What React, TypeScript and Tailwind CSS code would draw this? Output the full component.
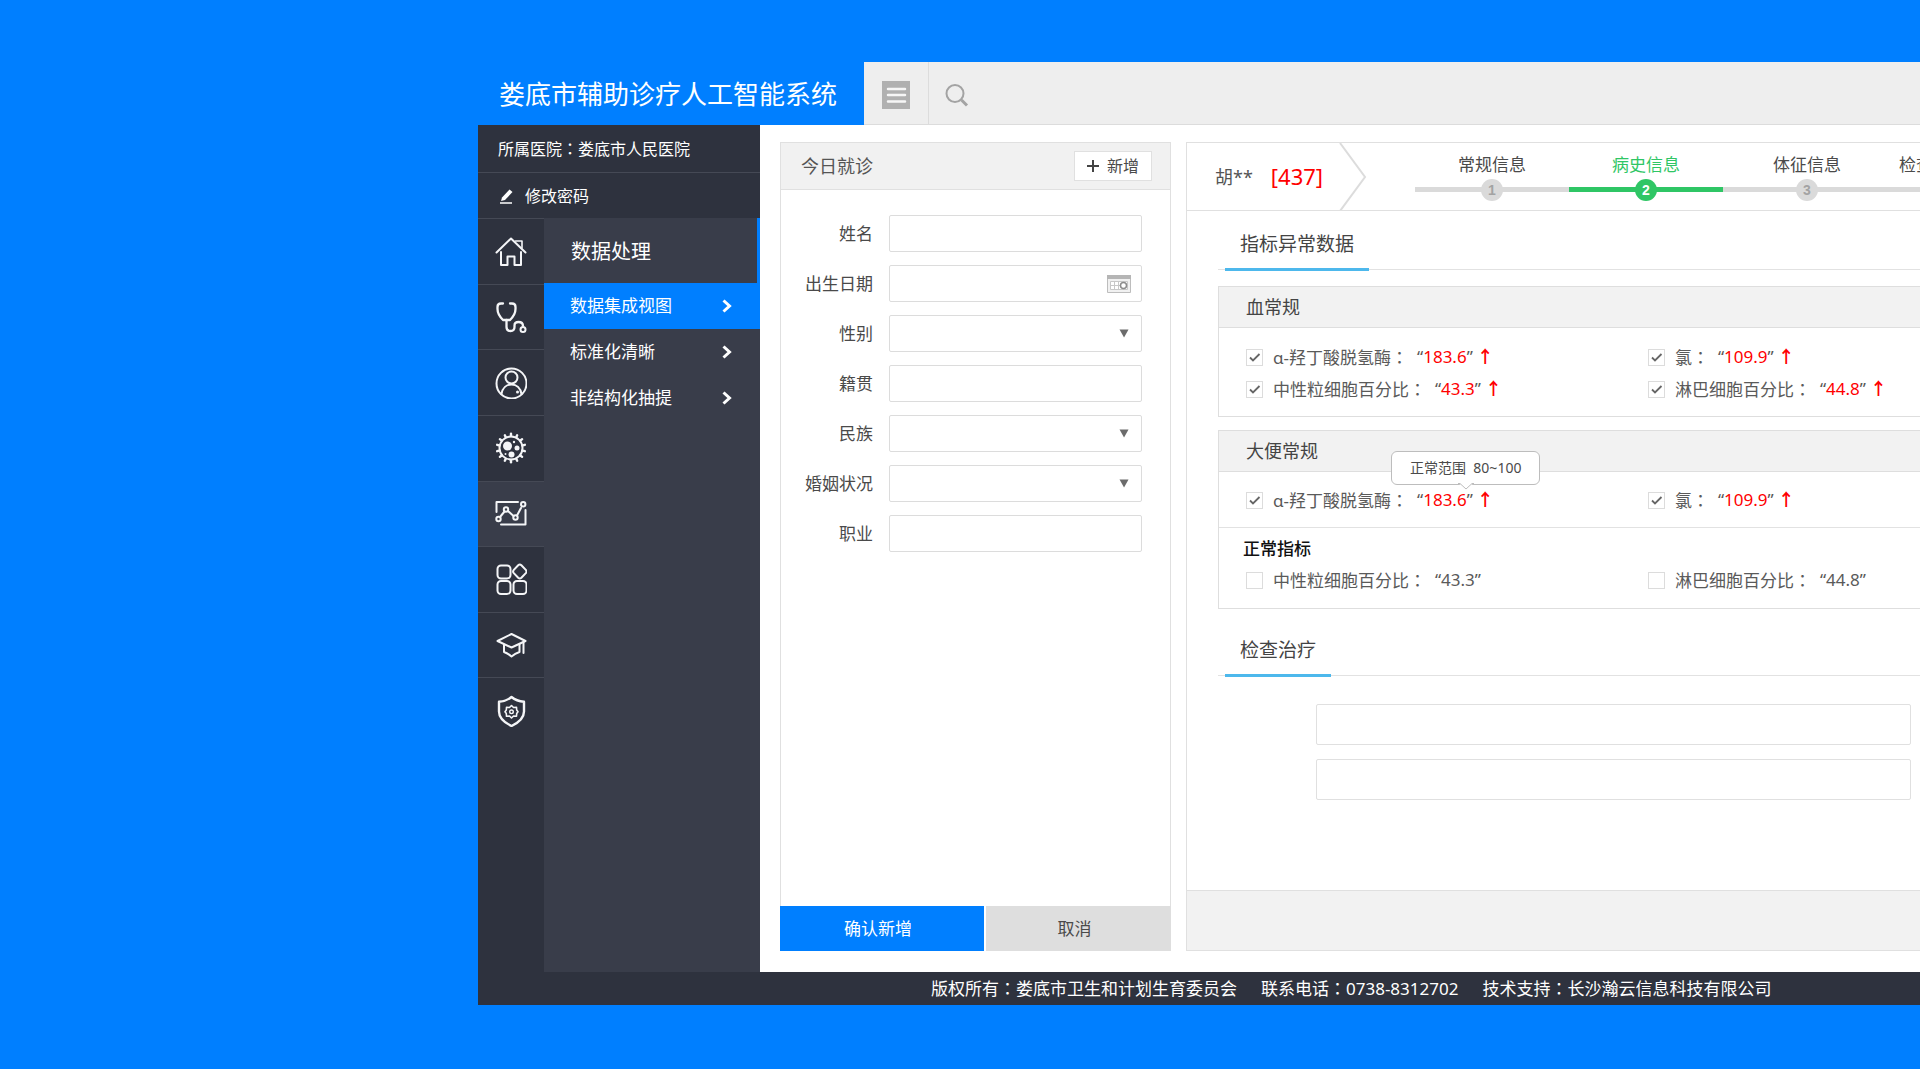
import React, { useId, useState } from "react";

const line = {
  fill: "none",
  stroke: "currentColor",
  strokeWidth: 2,
  strokeLinecap: "round" as const,
  strokeLinejoin: "round" as const,
};

function Glyph({ children }: { children: React.ReactNode }) {
  return (
    <svg viewBox="0 0 32 32" className="size-8 text-[#f4f5f7]" aria-hidden="true" {...line}>
      {children}
    </svg>
  );
}

const spikes = Array.from({ length: 14 }, (_, i) => (i * 360) / 14);

const navItems = [
  {
    label: "首页",
    icon: (
      <Glyph>
        <path d="M1.5 17.5 16 3.5l14.5 14" />
        <path d="M20.500 6h6.500v7" strokeWidth={1.6} />
        <path d="M6 17v13h6.500v-8.500h7V30H26V17" />
      </Glyph>
    ),
  },
  {
    label: "诊疗",
    icon: (
      <Glyph>
        <path d="M8 2.500H6Q2.500 2.500 2.500 6v2c0 5 2.500 8 5.500 11h7c3-3 5.500-6 5.500-11V6q0-3.500-3.500-3.500h-2" strokeWidth={2.3} />
        <path d="M11.500 19v7q0 4 4 4t4-4v-1.500q0-3.500 4-3.500 4.500 0 4.500 4" strokeWidth={2.3} />
        <circle cx="28" cy="28.500" r="2.500" />
      </Glyph>
    ),
  },
  {
    label: "患者",
    icon: (
      <Glyph>
        <circle cx="16.500" cy="16.500" r="15" />
        <circle cx="16.500" cy="10.500" r="6" />
        <path d="M6.500 27c1-6 5-9.500 10-9.500s9 3.500 10 9.500" />
        <circle cx="22.500" cy="25" r="1.500" fill="currentColor" stroke="none" />
      </Glyph>
    ),
  },
  {
    label: "病毒",
    icon: (
      <Glyph>
        <circle cx="16" cy="16" r="11.500" />
        {spikes.map((a) => (
          <path key={a} d="M16 4V1.800" strokeWidth={2.4} transform={`rotate(${a} 16 16)`} />
        ))}
        <g fill="currentColor" stroke="none">
          <circle cx="12.500" cy="14" r="4.500" />
          <circle cx="22" cy="16" r="2.500" />
          <circle cx="16.500" cy="22.500" r="3" />
          <circle cx="19" cy="10" r="1.200" />
          <circle cx="10.500" cy="22" r="1" />
        </g>
      </Glyph>
    ),
  },
  {
    label: "数据处理",
    icon: (
      <Glyph>
        <path d="M1.500 14V4H23" />
        <path d="M30.500 12v14.500H6" />
        <circle cx="3.500" cy="21" r="2.200" />
        <circle cx="11" cy="11.500" r="2.200" />
        <circle cx="20.500" cy="19.500" r="2.200" />
        <circle cx="28.200" cy="6.200" r="2.200" />
        <path d="m5 19 4.500-5.500M13 13l5.500 5M22 17.500l4-7.500" />
      </Glyph>
    ),
  },
  {
    label: "应用",
    icon: (
      <Glyph>
        <rect x="2.500" y="2.500" width="13" height="13" rx="3.500" />
        <path d="M23.200 2.200q1.600-1.400 3.200 0l4.400 4.700q1.400 1.600 0 3.200l-4.400 4.700q-1.600 1.400-3.200 0l-4.400-4.700q-1.400-1.600 0-3.200z" />
        <rect x="2.500" y="18" width="13" height="13" rx="3.500" />
        <rect x="18.500" y="18" width="13" height="13" rx="3.500" />
      </Glyph>
    ),
  },
  {
    label: "教学",
    icon: (
      <Glyph>
        <path d="M2.500 12 16.500 5 30.500 12 16.500 18.500z" />
        <path d="M9 15.500V23q4 1.500 7.500 4.500Q20 24.500 24.500 23v-7.500" />
        <path d="M28.500 13v11" />
      </Glyph>
    ),
  },
  {
    label: "安全设置",
    icon: (
      <Glyph>
        <path d="M16.500 2q5 4.200 12.500 4.700v9.800q0 8.500-12.500 14.500Q4 25 4 16.500V6.700Q11.500 6.200 16.500 2z" strokeWidth={2.4} />
        <path d="m16.500 10.500 2 2 3-.3.200 2.800 1.300 1.800-1.300 1.700-.2 2.800-3-.3-2 2-2-2-3 .3-.2-2.800L10 16.800l1.300-1.800.2-2.800 3 .3z" strokeWidth={1.6} />
        <circle cx="16.500" cy="16.800" r="1.800" strokeWidth={1.4} />
      </Glyph>
    ),
  },
];

const subItems = ["数据集成视图", "标准化清晰", "非结构化抽提"];

/* Full-width colon whose dots sit in the middle of the em box. */
function Colon() {
  return <span className="font-['Noto_Sans_CJK_TC',sans-serif]">：</span>;
}

function Sidebar() {
  return (
    <aside className="flex w-[282px] shrink-0 flex-col bg-[#2e323e] text-white">
      <div className="flex h-[47px] items-center pl-5 text-base">
        <span>所属医院<Colon />娄底市人民医院</span>
      </div>
      <button type="button" className="flex h-[46px] items-center gap-[11px] border-t border-[#454955] pl-[21px] text-left text-base">
        <svg viewBox="0 0 15 16" className="h-4 w-[15px]" aria-hidden="true">
          <path d="M2 13 3 9.500 10.500 1.500 13.500 4 6 12z" fill="currentColor" />
          <path d="M1 15h12" stroke="currentColor" strokeWidth="1.500" />
        </svg>
        修改密码
      </button>
      <div className="flex flex-1">
        <nav className="w-[66px] shrink-0" aria-label="主菜单">
          <div className="grid h-[525px] grid-rows-8">
            {navItems.map((item, i) => (
              <button
                key={item.label}
                type="button"
                aria-label={item.label}
                className={`flex items-center justify-center border-t border-[#454955] ${i === 4 ? "bg-[#393d4a]" : ""}`}
              >
                {item.icon}
              </button>
            ))}
          </div>
        </nav>
        <nav className="flex-1 bg-[#393d4a]" aria-label="数据处理">
          <h2 className="flex h-[65px] items-center border-r-3 border-[#007fff] pt-[3px] pl-[27px] text-xl">数据处理</h2>
          <ul>
            {subItems.map((label, i) => (
              <li key={label}>
                <a href="#" className={`flex h-[46px] items-center justify-between pr-7 pl-[26px] text-[17px] ${i === 0 ? "bg-[#007fff]" : ""}`}>
                  {label}
                  <svg viewBox="0 0 10 14" className="h-[14px] w-[10px]" fill="none" stroke="currentColor" strokeWidth="3" aria-hidden="true">
                    <path d="m1.500 1.500 6 5.500-6 5.500" />
                  </svg>
                </a>
              </li>
            ))}
          </ul>
        </nav>
      </div>
    </aside>
  );
}

const fields = [
  { label: "姓名", kind: "text" },
  { label: "出生日期", kind: "date" },
  { label: "性别", kind: "select" },
  { label: "籍贯", kind: "text" },
  { label: "民族", kind: "select" },
  { label: "婚姻状况", kind: "select" },
  { label: "职业", kind: "text" },
];

function Field({ label, kind }: { label: string; kind: string }) {
  const id = useId();
  const box = "h-[37px] w-full appearance-none rounded-[2px] border border-[#dcdcdc] bg-white px-3 text-[#555]";
  return (
    <div className="flex items-center">
      <label htmlFor={id} className="w-[92px] text-right text-[17px] text-[#4a4a4a]">
        {label}
      </label>
      <div className="relative ml-4 flex-1">
        {kind === "select" ? <select id={id} className={box} /> : <input id={id} type="text" className={box} />}
        {kind === "select" && (
          <svg viewBox="0 0 10 9" className="pointer-events-none absolute top-[14px] right-[13px] h-[9px] w-[10px]" aria-hidden="true">
            <path d="M.5.500h9L5 8.500z" fill="#6b6b6b" />
          </svg>
        )}
        {kind === "date" && (
          <svg viewBox="0 0 24 18" className="pointer-events-none absolute top-[10px] right-[11px] h-[18px] w-6" aria-hidden="true">
            <path d="M.5.500h23v17H.5z" fill="#f1f1f1" stroke="#bdbdbd" />
            <path d="M0 0h24v4H0z" fill="#b5b5b5" />
            <path d="M3.500 6.500h17v8h-17zM3.500 10.500h17M7.500 6.500v8M11.500 6.500v8" fill="#fff" stroke="#c8c8c8" />
            <circle cx="16.500" cy="10.500" r="3" fill="#fff" stroke="#8c8c8c" strokeWidth="1.500" />
          </svg>
        )}
      </div>
    </div>
  );
}

function IntakeForm() {
  return (
    <form className="flex w-[391px] shrink-0 flex-col" onSubmit={(e) => e.preventDefault()}>
      <div className="flex h-12 items-center justify-between border border-[#e0e0e0] bg-[#f1f1f1] pr-[18px] pl-5">
        <h2 className="text-lg text-[#555]">今日就诊</h2>
        <button type="button" className="flex h-[30px] items-center gap-2 border border-[#e0e0e0] bg-white px-3 text-base text-[#4a4a4a]">
          <svg viewBox="0 0 12 12" className="size-3" aria-hidden="true">
            <path d="M6 0v12M0 6h12" stroke="#444" strokeWidth="2" />
          </svg>
          新增
        </button>
      </div>
      <div className="flex flex-1 flex-col gap-[13px] border-x border-[#e0e0e0] pt-[25px] pr-7 pb-6">
        {fields.map((f) => (
          <Field key={f.label} {...f} />
        ))}
      </div>
      <div className="flex h-[45px] gap-[2px] text-[17px]">
        <button type="submit" className="w-[204px] bg-[#007fff] pr-2 text-white">确认新增</button>
        <button type="button" className="flex-1 bg-[#dedede] pr-2 text-[#4a4a4a]">取消</button>
      </div>
    </form>
  );
}

const steps = [
  { n: 1, label: "常规信息", width: "w-[154px]" },
  { n: 2, label: "病史信息", width: "w-[154px]" },
  { n: 3, label: "体征信息", width: "w-[168px]" },
  { n: 4, label: "检查信息", width: "w-[84px]" },
];

function Stepper() {
  return (
    <ol className="flex pl-[48px]">
      {steps.map((s) => {
        const active = s.n === 2;
        return (
          <li key={s.n} className={`flex shrink-0 flex-col items-center pt-2 ${s.width}`}>
            <span className={`text-[17px] leading-[28px] ${active ? "text-[#2fc665]" : "text-[#4a4a4a]"}`}>{s.label}</span>
            <span className={`mt-2 flex h-[5px] w-full items-center justify-center ${active ? "bg-[#2fc665]" : "bg-[#dadada]"}`}>
              <span
                className={`flex size-[22px] shrink-0 items-center justify-center rounded-full font-['Liberation_Sans',sans-serif] text-sm font-bold ${
                  active ? "bg-[#2fc665] text-white" : "bg-[#dadada] text-[#a3a3a3]"
                }`}
              >
                {s.n}
              </span>
            </span>
          </li>
        );
      })}
    </ol>
  );
}

type IndicatorProps = { name: string; value: string; high?: boolean; tip?: string };

function Indicator({ name, value, high = false, tip }: IndicatorProps) {
  const [checked, setChecked] = useState(high);
  return (
    <label className="flex h-8 items-center text-[17px] whitespace-nowrap text-[#5a5a5a]">
      <span className="relative mr-[10px] size-[17px]">
        <input
          type="checkbox"
          checked={checked}
          onChange={(e) => setChecked(e.target.checked)}
          className="peer block size-[17px] appearance-none border border-[#dcdcdc] bg-white"
        />
        <svg viewBox="0 0 17 17" className="pointer-events-none absolute inset-0 hidden peer-checked:block" fill="none" stroke="#666" strokeWidth="1.800" aria-hidden="true">
          <path d="m4 8.500 3 3L13.500 5" />
        </svg>
      </span>
      <span>{name}<Colon /></span>
      <span className="relative ml-[9px]">
        “<span className={high ? "text-[#ff0000]" : ""}>{value}</span>”
        {high && <span className="ml-1 font-bold text-[#ff0000]">↑</span>}
        {tip && (
          <span role="tooltip" className="absolute bottom-7 left-[-26px] rounded-[6px] border border-[#bdbdbd] bg-white px-[18px] py-[6px] text-sm whitespace-pre text-[#4a4a4a]">
            {tip}
            <svg viewBox="0 0 16 8" className="absolute top-full left-1/2 h-2 w-4 -translate-x-1/2 -translate-y-px" aria-hidden="true">
              <path d="M0 0h16L8 6z" fill="#fff" />
              <path d="m0 .500 2 0L8 6 14 .500h2" fill="none" stroke="#bdbdbd" />
            </svg>
          </span>
        )}
      </span>
    </label>
  );
}

function SectionTitle({ children }: { children: React.ReactNode }) {
  return (
    <div className="flex border-b border-[#e2e2e2] pl-[7px]">
      <h2 className="-mb-[2px] border-b-3 border-[#4db8ec] px-[15px] pb-[9px] text-[19px] leading-[30px] text-[#444]">{children}</h2>
    </div>
  );
}

function PanelHead({ children }: { children: React.ReactNode }) {
  return <h3 className="flex h-[41px] items-center border-b border-[#dedede] bg-[#f2f2f2] pl-[27px] text-lg text-[#444]">{children}</h3>;
}

const pair = "grid grid-cols-[402px_1fr] pl-[27px]";
const panel = "border-y border-l border-[#dedede]";

function PatientRecord() {
  return (
    <section className="flex min-w-0 flex-1 flex-col border-y border-l border-[#e0e0e0]">
      <header className="flex h-[68px] shrink-0 overflow-hidden border-b border-[#e0e0e0]">
        <div className="flex w-[152px] shrink-0 items-center gap-[18px] pl-7">
          <span className="text-lg text-[#555]">胡**</span>
          <span className="text-[22px] text-[#ff0000]">[437]</span>
        </div>
        <svg viewBox="0 0 28 68" className="h-[68px] w-7 shrink-0" fill="none" stroke="#dcdcdc" strokeWidth="2" aria-hidden="true">
          <path d="m1 0 25 34L1 68" />
        </svg>
        <Stepper />
      </header>

      <div className="flex-1 pl-[31px]">
        <div className="pt-[18px]">
          <SectionTitle>指标异常数据</SectionTitle>
        </div>

        <div className={`mt-4 ${panel}`}>
          <PanelHead>血常规</PanelHead>
          <div className={`${pair} pt-[13px] pb-[11px]`}>
            <Indicator name="α-羟丁酸脱氢酶" value="183.6" high />
            <Indicator name="氯" value="109.9" high />
            <Indicator name="中性粒细胞百分比" value="43.3" high />
            <Indicator name="淋巴细胞百分比" value="44.8" high />
          </div>
        </div>

        <div className={`mt-[13px] ${panel}`}>
          <PanelHead>大便常规</PanelHead>
          <div className={`${pair} border-b border-[#e2e2e2] pt-3 pb-[11px]`}>
            <Indicator name="α-羟丁酸脱氢酶" value="183.6" high tip="正常范围  80~100" />
            <Indicator name="氯" value="109.9" high />
          </div>
          <h4 className="pt-[7px] pl-6 text-[17px] leading-[28px] font-medium text-[#111]">正常指标</h4>
          <div className={`${pair} pt-px pb-3`}>
            <Indicator name="中性粒细胞百分比" value="43.3" />
            <Indicator name="淋巴细胞百分比" value="44.8" />
          </div>
        </div>

        <div className="pt-[26px]">
          <SectionTitle>检查治疗</SectionTitle>
        </div>
        <div className="flex flex-col gap-[14px] pt-7 pr-[9px] pl-[98px]">
          <input type="text" aria-label="检查" className="h-[41px] w-full rounded-[2px] border border-[#e0e0e0] px-3" />
          <input type="text" aria-label="治疗" className="h-[41px] w-full rounded-[2px] border border-[#e0e0e0] px-3" />
        </div>
      </div>

      <div className="h-[60px] border-t border-[#e0e0e0] bg-[#f2f2f2]" />
    </section>
  );
}

export default function App() {
  return (
    <div className="flex min-h-screen flex-col overflow-x-hidden bg-[#007fff] pt-[62px] pb-16 pl-[478px] font-['Noto_Sans','Noto_Sans_CJK_SC',sans-serif]">
      <header className="flex h-[63px]">
        <h1 className="flex w-[386px] shrink-0 items-center pt-[2px] pl-[21px] text-[26px] whitespace-nowrap text-white">娄底市辅助诊疗人工智能系统</h1>
        <div className="flex flex-1 border-b border-[#dcdcdc] bg-[#eeeeee]">
          <button type="button" aria-label="菜单" className="flex w-[65px] items-center justify-center border-r border-[#dcdcdc] pt-[3px]">
            <svg viewBox="0 0 28 28" className="size-7" aria-hidden="true">
              <path d="M0 0h28v28H0z" fill="#b0b0b0" />
              <path d="M6 8h17M6 14h17M6 20.500h17" stroke="#f6f6f6" strokeWidth="2.500" strokeLinecap="round" />
            </svg>
          </button>
          <button type="button" aria-label="搜索" className="flex items-center pt-[3px] pl-4">
            <svg viewBox="0 0 24 24" className="size-6" fill="none" stroke="#a3a3a3" aria-hidden="true">
              <circle cx="10" cy="10.500" r="8.500" strokeWidth="2" />
              <path d="m16.500 17 5.500 5.500" strokeWidth="3" />
            </svg>
          </button>
        </div>
      </header>

      <div className="flex flex-1">
        <Sidebar />
        <main className="flex min-w-0 flex-1 gap-[15px] bg-white pt-[17px] pb-[21px] pl-5">
          <IntakeForm />
          <PatientRecord />
        </main>
      </div>

      <footer className="flex h-[33px] items-center gap-6 bg-[#2e323e] pl-[453px] text-[17px] whitespace-nowrap text-white">
        <span>版权所有<Colon />娄底市卫生和计划生育委员会</span>
        <span>联系电话<Colon />0738-8312702</span>
        <span>技术支持<Colon />长沙瀚云信息科技有限公司</span>
      </footer>
    </div>
  );
}
